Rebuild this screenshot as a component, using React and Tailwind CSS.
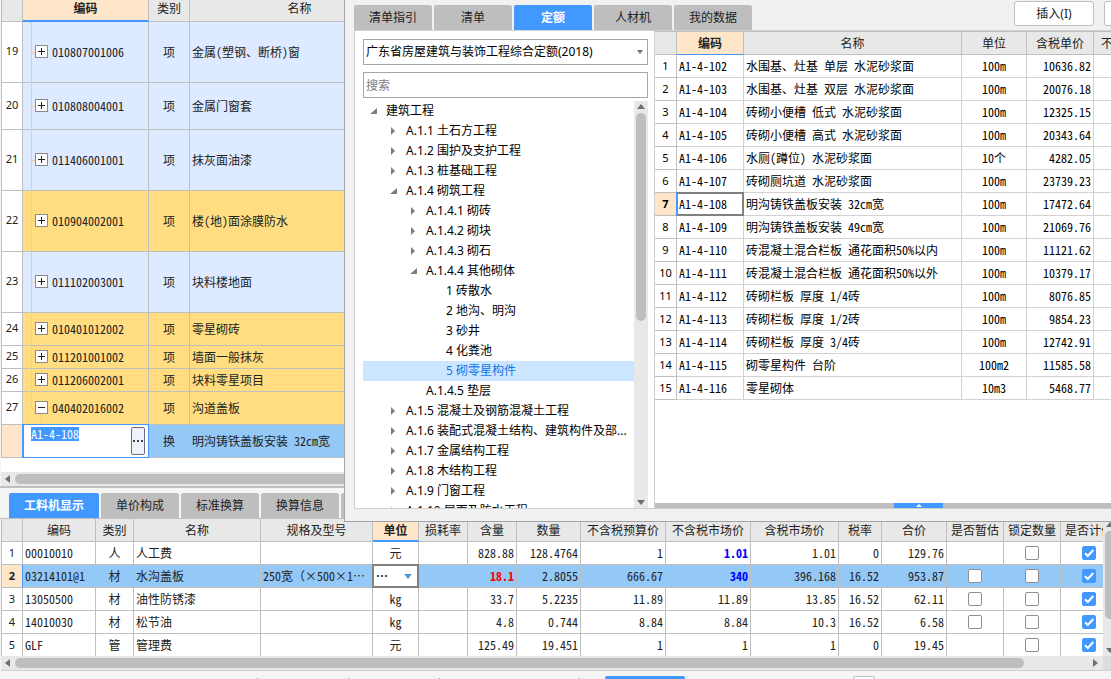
import { useEffect, useRef, useState } from "react";
import clsx from "clsx";

const LIST_ROWS = [
  { no: 19, code: "010807001006", name: "金属(塑钢、断桥)窗", tone: "blue", h: "h-[61px]" },
  { no: 20, code: "010808004001", name: "金属门窗套", tone: "blue", h: "h-[47px]" },
  { no: 21, code: "011406001001", name: "抹灰面油漆", tone: "blue", h: "h-[61px]" },
  { no: 22, code: "010904002001", name: "楼(地)面涂膜防水", tone: "yellow", h: "h-[61px]" },
  { no: 23, code: "011102003001", name: "块料楼地面", tone: "blue", h: "h-[61px]" },
  { no: 24, code: "010401012002", name: "零星砌砖", tone: "yellow", h: "h-[33px]" },
  { no: 25, code: "011201001002", name: "墙面一般抹灰", tone: "yellow", h: "h-[23px]" },
  { no: 26, code: "011206002001", name: "块料零星项目", tone: "yellow", h: "h-[23px]" },
  { no: 27, code: "040402016002", name: "沟道盖板", tone: "yellow", h: "h-[33px]", open: true },
];

const TREE = [
  { level: 0, label: "建筑工程", state: "open" },
  { level: 1, label: "A.1.1 土石方工程", state: "closed" },
  { level: 1, label: "A.1.2 围护及支护工程", state: "closed" },
  { level: 1, label: "A.1.3 桩基础工程", state: "closed" },
  { level: 1, label: "A.1.4 砌筑工程", state: "open" },
  { level: 2, label: "A.1.4.1 砌砖", state: "closed" },
  { level: 2, label: "A.1.4.2 砌块", state: "closed" },
  { level: 2, label: "A.1.4.3 砌石", state: "closed" },
  { level: 2, label: "A.1.4.4 其他砌体", state: "open" },
  { level: 3, label: "1 砖散水" },
  { level: 3, label: "2 地沟、明沟" },
  { level: 3, label: "3 砂井" },
  { level: 3, label: "4 化粪池" },
  { level: 3, label: "5 砌零星构件", selected: true },
  { level: 2, label: "A.1.4.5 垫层" },
  { level: 1, label: "A.1.5 混凝土及钢筋混凝土工程", state: "closed" },
  { level: 1, label: "A.1.6 装配式混凝土结构、建筑构件及部...", state: "closed" },
  { level: 1, label: "A.1.7 金属结构工程", state: "closed" },
  { level: 1, label: "A.1.8 木结构工程", state: "closed" },
  { level: 1, label: "A.1.9 门窗工程", state: "closed" },
  { level: 1, label: "A.1.10 屋面及防水工程", state: "closed" },
];
const INDENT = ["pl-[7px]", "pl-[27px]", "pl-[47px]", "pl-[67px]"];

const QUOTAS = [
  ["A1-4-102", "水围基、灶基 单层 水泥砂浆面", "100m", "10636.82"],
  ["A1-4-103", "水围基、灶基 双层 水泥砂浆面", "100m", "20076.18"],
  ["A1-4-104", "砖砌小便槽 低式 水泥砂浆面", "100m", "12325.15"],
  ["A1-4-105", "砖砌小便槽 高式 水泥砂浆面", "100m", "20343.64"],
  ["A1-4-106", "水厕(蹲位) 水泥砂浆面", "10个", "4282.05"],
  ["A1-4-107", "砖砌厕坑道 水泥砂浆面", "100m", "23739.23"],
  ["A1-4-108", "明沟铸铁盖板安装 32cm宽", "100m", "17472.64"],
  ["A1-4-109", "明沟铸铁盖板安装 49cm宽", "100m", "21069.76"],
  ["A1-4-110", "砖混凝土混合栏板 通花面积50%以内", "100m", "11121.62"],
  ["A1-4-111", "砖混凝土混合栏板 通花面积50%以外", "100m", "10379.17"],
  ["A1-4-112", "砖砌栏板 厚度 1/4砖", "100m", "8076.85"],
  ["A1-4-113", "砖砌栏板 厚度 1/2砖", "100m", "9854.23"],
  ["A1-4-114", "砖砌栏板 厚度 3/4砖", "100m", "12742.91"],
  ["A1-4-115", "砌零星构件 台阶", "100m2", "11585.58"],
  ["A1-4-116", "零星砌体", "10m3", "5468.77"],
];

const DETAIL_HEADERS = [
  "编码", "类别", "名称", "规格及型号", "单位", "损耗率", "含量", "数量",
  "不含税预算价", "不含税市场价", "含税市场价", "税率", "合价", "是否暂估", "锁定数量", "是否计价",
];
const DETAILS = [
  { code: "00010010", type: "人", name: "人工费", spec: "", unit: "元", nums: ["828.88", "128.4764", "1", "1.01", "1.01", "0", "129.76"], temp: false, blue: true },
  { code: "03214101@1", type: "材", name: "水沟盖板", spec: "250宽（×500×1…", unit: "…", nums: ["18.1", "2.8055", "666.67", "340", "396.168", "16.52", "953.87"], temp: true, blue: true, active: true },
  { code: "13050500", type: "材", name: "油性防锈漆", spec: "", unit: "kg", nums: ["33.7", "5.2235", "11.89", "11.89", "13.85", "16.52", "62.11"], temp: true },
  { code: "14010030", type: "材", name: "松节油", spec: "", unit: "kg", nums: ["4.8", "0.744", "8.84", "8.84", "10.3", "16.52", "6.58"], temp: true },
  { code: "GLF", type: "管", name: "管理费", spec: "", unit: "元", nums: ["125.49", "19.451", "1", "1", "1", "0", "19.45"], temp: false },
];

const SONG = "font-['Noto_Sans_CJK_SC',sans-serif] [font-feature-settings:'hwid']";
const HEI = "font-['Noto_Sans','Noto_Sans_CJK_SC',sans-serif]";
const cell = "border-r border-b border-[#bfbfbf] p-0 pb-px font-normal";
const softCell = "border-r border-b border-[#d2d2d2] p-0 pb-px font-normal";

function Arrow({ dir, className }) {
  const points = {
    left: "5,0 5,8 0,4",
    right: "0,0 0,8 5,4",
    up: "0,5 8,5 4,0",
    down: "0,0 8,0 4,5",
  }[dir];
  const wide = dir === "up" || dir === "down";
  return (
    <svg width={wide ? 8 : 5} height={wide ? 5 : 8} className={clsx("shrink-0", className)} fill="#6b6e76" aria-hidden="true">
      <polygon points={points} />
    </svg>
  );
}

function TreeMark({ state }) {
  return (
    <svg width="7" height="8" className="shrink-0" fill="#7d7d7d" aria-hidden="true">
      {state === "open" && <polygon points="7,1 7,7 0,7" />}
      {state === "closed" && <polygon points="1,0 5,4 1,8" />}
    </svg>
  );
}

// brackets and multiplication signs in a spec keep their full-width form
function Spec({ text }) {
  return text.split(/([（×])/).map((part, i) =>
    part === "（" || part === "×" ? (
      <span key={i} className="[font-feature-settings:'fwid']">{part}</span>
    ) : (
      part
    )
  );
}

function Check({ label, initial = false }) {
  const [on, setOn] = useState(initial);
  return (
    <span className="relative block w-[14px] h-[14px] mx-auto">
      <input
        type="checkbox"
        aria-label={label}
        checked={on}
        onChange={(e) => setOn(e.target.checked)}
        className="block appearance-none w-[14px] h-[14px] rounded-[2px] border border-[#8f8f8f] bg-white checked:bg-[#4198ff] checked:border-[#4198ff]"
      />
      {on && (
        <svg viewBox="0 0 14 14" className="absolute inset-0 pointer-events-none" fill="none" stroke="#fff" strokeWidth="2" aria-hidden="true">
          <path d="M3 7.2 L5.8 10 L11.3 4" />
        </svg>
      )}
    </span>
  );
}

function Tab({ active, width, children }) {
  return (
    <button
      type="button"
      className={clsx(
        "shrink-0 rounded-t-[2px] text-xs",
        width || "w-[78px]",
        active ? "bg-[#4198ff] text-white font-bold" : "bg-[#bebebe] text-[#222]"
      )}
    >
      {children}
    </button>
  );
}

function ListTable() {
  const inputRef = useRef(null);
  const [code, setCode] = useState("A1-4-108");

  useEffect(() => {
    inputRef.current.focus();
    inputRef.current.select();
  }, []);

  return (
    <table className={clsx(SONG, "table-fixed border-separate border-spacing-0 w-[409px] border-l border-[#bfbfbf] text-xs text-[#222]")}>
      <colgroup>
        <col className="w-[21px]" />
        <col className="w-[126px]" />
        <col className="w-[41px]" />
        <col className="w-[220px]" />
      </colgroup>
      <thead>
        <tr className="h-[22px] bg-[#e8e8e8] align-top leading-[15px]">
          <th className={cell} />
          <th className="border-r border-r-[#bfbfbf] border-b-2 border-b-[#4198ff] bg-[#ffe6c8] p-0 font-bold">编码</th>
          <th className={cell}>类别</th>
          <th className={cell}>名称</th>
        </tr>
      </thead>
      <tbody>
        {LIST_ROWS.map((r) => (
          <tr key={r.no} className={clsx(r.h, r.tone === "blue" ? "bg-[#deeaff]" : "bg-[#ffdd80]")}>
            <th className={clsx(cell, HEI, "bg-white text-[11px]")}>{r.no}</th>
            <td className={clsx(cell, "relative pl-3")}>
              <span className={clsx("absolute left-2 top-0 w-px bg-[#ffc98a]", r.open ? "bottom-1/2" : "-bottom-px")} />
              <span className="absolute left-2 top-1/2 h-px w-1 bg-[#ffc98a]" />
              {r.open && <span className="absolute left-[18px] top-1/2 bottom-0 w-px bg-[#ffc98a]" />}
              <span className="relative flex items-center gap-1">
                <button type="button" aria-label={r.open ? "收起" : "展开"} className="w-[13px] h-[13px] shrink-0 border border-[#8a8a8a] bg-white">
                  <svg width="11" height="11" stroke="#222" className="block" aria-hidden="true">
                    <path d={r.open ? "M2 5.5H9" : "M2 5.5H9M5.5 2V9"} />
                  </svg>
                </button>
                {r.code}
              </span>
            </td>
            <td className={clsx(cell, "text-center")}>项</td>
            <td className={clsx(cell, "pl-[2px] whitespace-nowrap")}>{r.name}</td>
          </tr>
        ))}
        <tr className="h-[33px] bg-[#93c8f7]">
          <th className={clsx(cell, "bg-[#ffe6c8]")} />
          <td className={clsx(cell, "relative")}>
            <div className="absolute -inset-y-px -left-px -right-px flex items-start justify-between border border-l-2 border-[#4198ff] bg-white pt-[2px] pr-[3px] pl-[7px]">
              <input
                ref={inputRef}
                aria-label="编码"
                value={code}
                onChange={(e) => setCode(e.target.value)}
                className="block w-20 h-[14px] leading-[14px] outline-none selection:bg-[#4198ff] selection:text-white"
              />
              <button type="button" aria-label="选择" className="flex w-[14px] h-7 items-center justify-center rounded-[2px] border border-[#6b6e76] bg-[#eff2fb]">
                <svg width="10" height="2" fill="#444" className="shrink-0" aria-hidden="true">
                  <path d="M0 0h2v2H0zM4 0h2v2H4zM8 0h2v2H8z" />
                </svg>
              </button>
            </div>
          </td>
          <td className={clsx(cell, "text-center")}>换</td>
          <td className={clsx(cell, "pl-[2px] whitespace-nowrap")}>明沟铸铁盖板安装 32cm宽</td>
        </tr>
      </tbody>
    </table>
  );
}

function QuotaTree() {
  return (
    <div className="flex flex-1 min-h-0">
      <ul role="tree" className="flex-1 min-w-0 overflow-hidden">
        {TREE.map((n) => (
          <li
            key={n.label}
            role="treeitem"
            aria-selected={!!n.selected}
            className={clsx(
              "flex h-5 items-center gap-[9px] whitespace-nowrap",
              INDENT[n.level],
              n.selected ? "bg-[#cce6ff] text-[#0f74e8]" : "text-black"
            )}
          >
            <TreeMark state={n.state} />
            {n.label}
          </li>
        ))}
      </ul>
      <div className="flex w-[14px] flex-col items-center gap-1 bg-[#e8e8e8] pt-[3px] pb-[3px]">
        <Arrow dir="up" />
        <div className="w-[10px] h-[208px] rounded-full bg-[#bebebe]" />
        <Arrow dir="down" className="mt-auto" />
      </div>
    </div>
  );
}

function QuotaTable() {
  return (
    <table className={clsx(SONG, "table-fixed border-separate border-spacing-0 w-[514px] text-xs text-black")}>
      <colgroup>
        <col className="w-[22px]" />
        <col className="w-[67px]" />
        <col className="w-[218px]" />
        <col className="w-[65px]" />
        <col className="w-[67px]" />
        <col className="w-[75px]" />
      </colgroup>
      <thead>
        <tr className="h-6 bg-[#e8e8e8] text-[#222]">
          <th className={clsx(cell, "border-t")} />
          <th className="border-t border-r border-[#bfbfbf] border-b border-b-[#4198ff] bg-[#ffe6c8] p-0 font-bold">编码</th>
          <th className={clsx(cell, "border-t")}>名称</th>
          <th className={clsx(cell, "border-t")}>单位</th>
          <th className={clsx(cell, "border-t")}>含税单价</th>
          <th className={clsx(cell, "border-t")}>不含税单价</th>
        </tr>
      </thead>
      <tbody>
        {QUOTAS.map(([code, name, unit, price], i) => {
          const current = i === 6;
          return (
            <tr key={code} className="h-[23px] bg-white">
              <th className={clsx("border-r border-b border-[#bfbfbf] p-0 text-[11px]", HEI, current ? "bg-[#ffe6c8] font-bold" : "font-normal")}>{i + 1}</th>
              <td className={clsx(softCell, "relative pl-[2px]")}>
                {current && <span className="absolute -inset-px border-2 border-[#808080] border-l-[#4198ff]" />}
                {code}
              </td>
              <td className={clsx(softCell, "pl-[2px] whitespace-nowrap")}>{name}</td>
              <td className={clsx(softCell, "text-center")}>{unit}</td>
              <td className={clsx(softCell, "pr-[2px] text-right")}>{price}</td>
              <td className={softCell} />
            </tr>
          );
        })}
      </tbody>
    </table>
  );
}

function QuotaDialog() {
  return (
    <section aria-label="定额查询" className={clsx(HEI, "absolute top-0 right-0 bottom-[157px] left-[344px] flex flex-col overflow-hidden border-l border-b border-[#a3a3a3] bg-[#f1f1f1] pl-[9px] pb-3 text-xs")}>
      <div className="flex h-[30px] shrink-0 justify-between">
        <div className="flex gap-[2px] pt-[5px]">
          <Tab>清单指引</Tab>
          <Tab>清单</Tab>
          <Tab active>定额</Tab>
          <Tab>人材机</Tab>
          <Tab>我的数据</Tab>
        </div>
        <div className="flex w-[97px] shrink-0 gap-[10px] overflow-hidden pt-px pb-1">
          <button type="button" className="w-20 shrink-0 rounded-[3px] border border-[#bfbfbf] bg-white text-[#222]">插入(I)</button>
          <button type="button" aria-label="替换" className="w-20 shrink-0 rounded-[3px] border border-[#bfbfbf] bg-white" />
        </div>
      </div>
      <div className="flex flex-1 min-h-0 border-t border-l border-b border-[#d0d0d0] bg-white">
        <div className="flex w-[300px] shrink-0 flex-col border-r border-[#d0d0d0] pt-2 pr-[6px] pl-2">
          <div className="relative mb-[7px]">
            <select aria-label="定额库" className="block w-full h-[26px] appearance-none border border-[#a6a6a6] bg-white pl-[2px] text-black">
              <option>广东省房屋建筑与装饰工程综合定额(2018)</option>
            </select>
            <svg width="6" height="4" className="absolute right-[5px] top-[11px] pointer-events-none" fill="#6b6e76" aria-hidden="true">
              <polygon points="0,0 6,0 3,4" />
            </svg>
          </div>
          <input type="search" aria-label="搜索" placeholder="搜索" className="mb-[3px] block w-full h-[26px] shrink-0 border border-[#a6a6a6] bg-white pl-[2px] placeholder:text-[#7d7d7d]" />
          <QuotaTree />
        </div>
        <div className="flex flex-1 min-w-0 flex-col justify-between overflow-hidden">
          <QuotaTable />
          <div className="flex h-[5px] justify-center bg-[#bfbfbf] pl-[71px]">
            <button type="button" aria-label="展开详情" className="flex w-[49px] items-center justify-center bg-[#4198ff]">
              <svg width="6" height="3" fill="#fff" aria-hidden="true">
                <polygon points="0,3 6,3 3,0" />
              </svg>
            </button>
          </div>
        </div>
      </div>
    </section>
  );
}

function DetailTable() {
  return (
    <table className={clsx(SONG, "table-fixed border-separate border-spacing-0 w-[1117px] border-l border-[#bfbfbf] text-xs text-[#222]")}>
      <colgroup>
        <col className="w-[21px]" />
        <col className="w-[73px]" />
        <col className="w-[38px]" />
        <col className="w-[127px]" />
        <col className="w-[112px]" />
        <col className="w-[46px]" />
        <col className="w-[49px]" />
        <col className="w-[49px]" />
        <col className="w-[64px]" />
        <col className="w-[85px]" />
        <col className="w-[85px]" />
        <col className="w-[88px]" />
        <col className="w-[43px]" />
        <col className="w-[65px]" />
        <col className="w-[57px]" />
        <col className="w-[57px]" />
        <col className="w-[57px]" />
      </colgroup>
      <thead>
        <tr className="h-[23px] bg-[#e8e8e8] whitespace-nowrap">
          <th className={cell} />
          {DETAIL_HEADERS.map((h) =>
            h === "单位" ? (
              <th key={h} className="border-r border-r-[#bfbfbf] border-b-2 border-b-[#4198ff] bg-[#ffe6c8] p-0 font-bold">{h}</th>
            ) : (
              <th key={h} className={cell}>{h}</th>
            )
          )}
        </tr>
      </thead>
      <tbody>
        {DETAILS.map((d, i) => (
          <tr key={d.code} className={clsx("h-[23px]", d.active ? "bg-[#93c8f7]" : "bg-white")}>
            <th
              className={clsx(
                "border-b border-r border-b-[#bfbfbf] p-0 text-[11px]",
                HEI,
                d.active ? "border-r-[#4198ff] bg-[#ffe6c8] font-bold" : "border-r-[#bfbfbf] font-normal"
              )}
            >
              {i + 1}
            </th>
            <td className={clsx(cell, "pl-[2px]")}>{d.code}</td>
            <td className={clsx(cell, "text-center")}>{d.type}</td>
            <td className={clsx(cell, "pl-[2px]")}>{d.name}</td>
            <td className={clsx(cell, "overflow-hidden pl-[2px] whitespace-nowrap")}><Spec text={d.spec} /></td>
            <td className={clsx(cell, "relative text-center")}>
              {d.active ? (
                <div className="absolute -inset-px border-2 border-[#808080] bg-white">
                  <select aria-label="单位" className="block h-full w-full appearance-none pl-[2px] font-bold">
                    <option>…</option>
                  </select>
                  <svg width="8" height="5" className="absolute right-[5px] top-2 pointer-events-none" fill="#4a9bd4" aria-hidden="true">
                    <polygon points="0,0 8,0 4,5" />
                  </svg>
                </div>
              ) : (
                d.unit
              )}
            </td>
            <td className={cell} />
            {d.nums.map((n, k) => (
              <td
                key={k}
                className={clsx(
                  "border-r border-b border-[#bfbfbf] p-0 pr-[2px] pb-px text-right",
                  k === 0 && d.active && "font-bold text-[#ff0000]",
                  k === 3 && d.blue && "font-bold text-[#0000ff]"
                )}
              >
                {n}
              </td>
            ))}
            <td className={cell}>{d.temp && <Check label={`${d.name} 是否暂估`} />}</td>
            <td className={cell}><Check label={`${d.name} 锁定数量`} /></td>
            <td className={cell}><Check label={`${d.name} 是否计价`} initial /></td>
          </tr>
        ))}
      </tbody>
    </table>
  );
}

export default function App() {
  return (
    <div className="relative flex h-screen flex-col overflow-hidden bg-[#f5f5f5]">
      <main className="flex flex-1 min-h-0 flex-col border-b-2 border-[#bfbfbf] pl-px">
        <div className="flex-1 min-h-0 overflow-hidden bg-white">
          <ListTable />
        </div>
        <div className="flex h-[14px] shrink-0 items-center gap-[5px] bg-[#e8e8e8] pl-1">
          <Arrow dir="left" />
          <div className="h-[10px] flex-1 rounded-full bg-[#bebebe]" />
        </div>
      </main>

      <section aria-label="明细" className="shrink-0">
        <div className={clsx(HEI, "flex h-[30px] gap-[2px] pt-[5px] pl-[9px]")}>
          <Tab active width="w-[90px]">工料机显示</Tab>
          <Tab>单价构成</Tab>
          <Tab>标准换算</Tab>
          <Tab>换算信息</Tab>
          <span className="flex-1 max-w-[78px] rounded-t-[2px] bg-[#bebebe]" />
        </div>
        <div className="flex h-[138px] border-t border-[#bfbfbf] pl-px">
          <div className="flex-1 min-w-0 overflow-hidden bg-white">
            <DetailTable />
          </div>
          <div className="w-2 shrink-0 overflow-hidden bg-[#e8e8e8]">
            <div className="flex h-full w-[14px] flex-col items-center gap-1 pt-[3px] pb-[3px]">
              <Arrow dir="up" />
              <div className="h-[88px] w-[10px] rounded-full bg-[#bebebe]" />
              <Arrow dir="down" className="mt-auto" />
            </div>
          </div>
        </div>
        <div className="ml-px flex h-[15px] border-b border-[#d0d0d0] bg-[#dcdcdc]">
          <div className="flex flex-1 items-center gap-[5px] bg-[#e8e8e8] pl-1 pr-[5px]">
            <Arrow dir="left" />
            <div className="mr-16 h-[10px] flex-1 rounded-full bg-[#bebebe]" />
            <Arrow dir="right" />
          </div>
          <div className="w-2" />
        </div>
        <div className="flex h-2 items-end overflow-hidden">
          <span className="ml-[257px] h-px w-px bg-[#999]" />
          <span className="ml-[90px] h-px w-px bg-[#999]" />
          <span className="ml-[90px] h-px w-px bg-[#999]" />
          <span className="ml-[139px] h-px w-px bg-[#999]" />
          <span className="ml-[25px] h-[3px] w-20 rounded-t-[2px] bg-[#4198ff]" />
          <span className="ml-[168px] h-[3px] w-[22px] rounded-t-[3px] border border-b-0 border-[#bfbfbf] bg-white" />
        </div>
      </section>

      <QuotaDialog />
    </div>
  );
}
